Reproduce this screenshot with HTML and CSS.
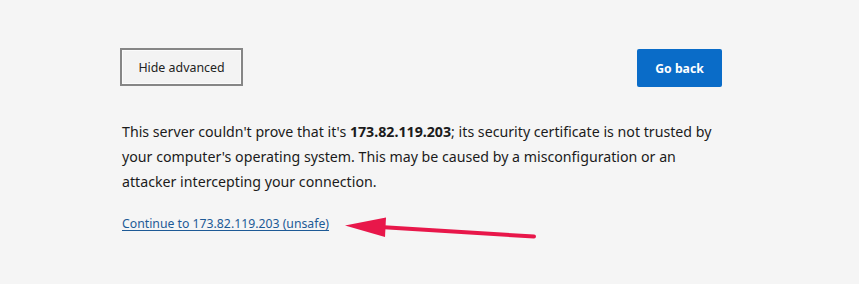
FILE: index.html
```html
<!DOCTYPE html>
<html lang="en">
<head>
<meta charset="utf-8">
<title>Privacy error</title>
<link rel="stylesheet" href="styles.css">
</head>
<body>
<main class="page">
  <div class="actions">
    <button class="btn-secondary" type="button">Hide advanced</button>
    <button class="btn-primary" type="button">Go back</button>
  </div>
  <p class="details">This server couldn't prove that it's <strong>173.82.119.203</strong>; its security certificate is not trusted by your computer's operating system. This may be caused by a misconfiguration or an attacker intercepting your connection.</p>
  <a class="proceed" href="#">Continue to 173.82.119.203 (unsafe)</a>
</main>
<svg class="arrow" width="859" height="284" viewBox="0 0 859 284" aria-hidden="true">
  <line x1="534" y1="236.5" x2="380" y2="227" stroke="#e8174a" stroke-width="4" stroke-linecap="round"/>
  <polygon points="345,225.5 386,217.5 385,237" fill="#e8174a"/>
</svg>
</body>
</html>
```
FILE: styles.css
```css
html, body {
  margin: 0;
  padding: 0;
  background: #f5f5f5;
}
body {
  position: relative;
  width: 859px;
  height: 284px;
  overflow: hidden;
  font-family: "Noto Sans", "Open Sans", sans-serif;
  color: #1b1b1b;
}
.page {
  width: 602px;
  padding: 48px 0 0 120px;
}
.actions {
  display: flex;
  justify-content: space-between;
  align-items: flex-start;
}
.btn-secondary {
  box-sizing: border-box;
  width: 123px;
  height: 38px;
  border: 2px solid #868686;
  box-shadow: inset 0 0 0 1px #fbfbfb;
  background: #f3f3f3;
  color: #222;
  font-family: inherit;
  font-size: 12.4px;
  padding: 0;
}
.btn-primary {
  box-sizing: border-box;
  width: 85px;
  height: 38px;
  margin-top: 1px;
  border: none;
  border-radius: 2px;
  background: #0a6cc8;
  color: #fff;
  font-family: inherit;
  font-size: 12.2px;
  font-weight: 700;
  padding: 0;
}
.details {
  width: 610px;
  margin: 32px 0 0 2px;
  font-size: 14.2px;
  line-height: 25px;
}
.details strong {
  font-weight: 700;
}
.proceed {
  display: inline-block;
  margin: 20px 0 0 2px;
  font-size: 12.25px;
  line-height: 20px;
  color: #1d5a96;
  text-decoration: underline;
  text-underline-offset: 2px;
}
.arrow {
  position: absolute;
  left: 0;
  top: 0;
  pointer-events: none;
}
```
